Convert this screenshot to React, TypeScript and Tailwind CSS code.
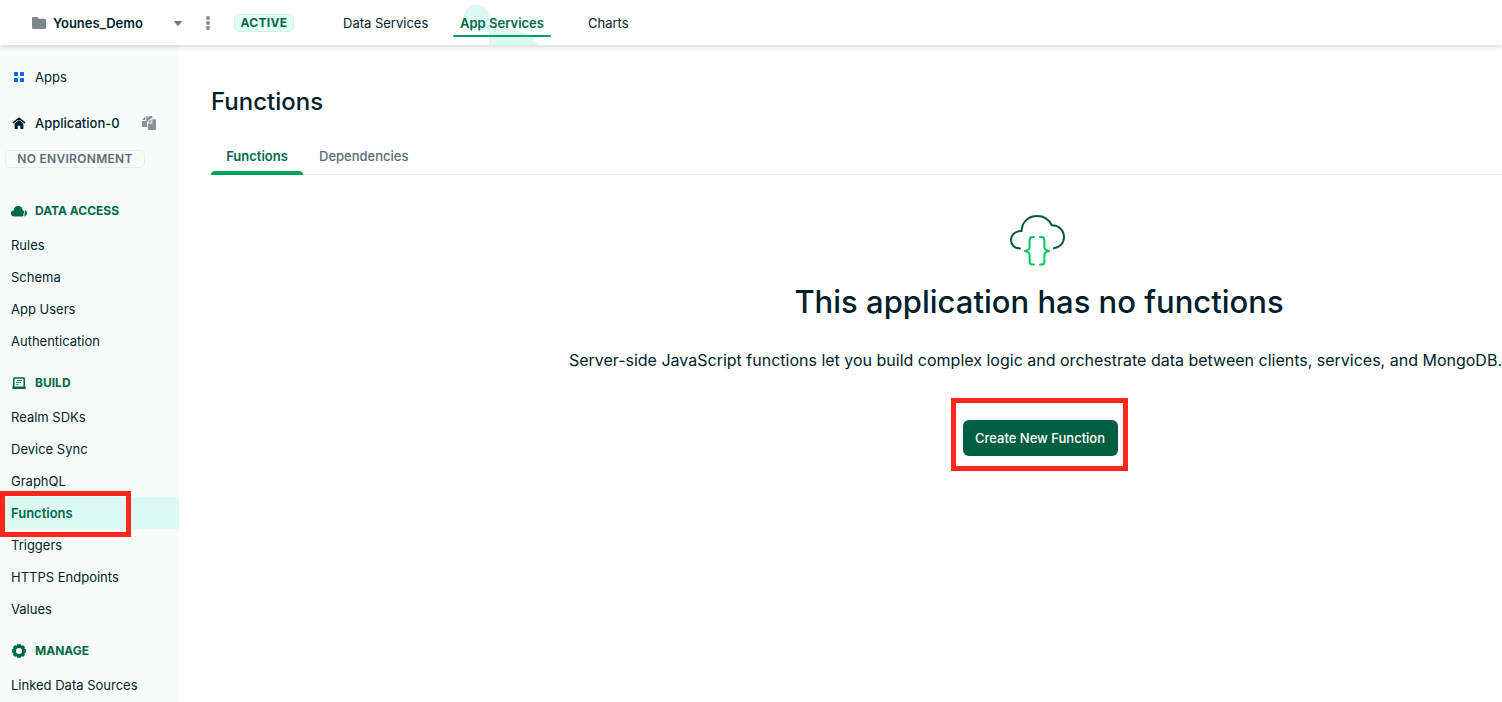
import type { ReactNode } from "react";

type Section = { title: string; icon: ReactNode; items: string[] };

function FolderIcon() {
  return (
    <svg viewBox="0 0 14 12" className="h-3 w-3.5 shrink-0" fill="#7b878d" aria-hidden="true">
      <path d="M0 1.2Q0 0 1.2 0H5Q6 0 6.3 1L6.6 1.8H12.8Q14 1.8 14 3V10.8Q14 12 12.8 12H1.2Q0 12 0 10.8Z" />
    </svg>
  );
}

function AppsIcon() {
  return (
    <svg viewBox="0 0 16 16" className="size-4 shrink-0" fill="#016bf8" aria-hidden="true">
      <path d="M3 3h4v4H3zM9 3h4v4H9zM3 9h4v4H3zM9 9h4v4H9z" />
    </svg>
  );
}

function HomeIcon() {
  return (
    <svg viewBox="0 0 16 16" className="size-4 shrink-0" aria-hidden="true">
      <path d="M2.4 7.6L8 3.1L13.6 7.6" fill="none" stroke="#001e2b" strokeWidth="1.5" strokeLinecap="round" />
      <path d="M8 5.1L12.4 8.6V13.2Q12.4 14 11.6 14H9.3V10.7H6.7V14H4.4Q3.6 14 3.6 13.2V8.6Z" fill="#001e2b" />
    </svg>
  );
}

function CopyIcon() {
  return (
    <svg viewBox="0 0 16 16" className="size-4" fill="#889397" aria-hidden="true">
      <path d="M1 5L4.4 1.4V5ZM5.3 1H6.7V3L8.2 1H10.4Q11.4 1 11.4 2V3.3H10L6 7.2V12H2Q1 12 1 11V6H5.3Z" />
      <path d="M6.9 7.5L10.3 4.2V7.5ZM11.3 4.2H14Q15 4.2 15 5.2V14Q15 15 14 15H7.9Q6.9 15 6.9 14V8.5H11.3Z" />
    </svg>
  );
}

function CloudIcon() {
  return (
    <svg viewBox="0 0 16 16" className="size-4 shrink-0" fill="#00684a" aria-hidden="true">
      <path d="M3.2 13.4Q0 13.2 0 10.4Q0 7.7 2.6 7.4Q3.2 3 7.2 3Q11 3 11.7 6.9Q13.2 7.5 13.2 9.2Q13.2 10.3 12.3 10.8Q12.8 11.4 12.6 12.2Q12.2 13.4 10.8 13.4Z" />
      <path d="M13.4 7.2Q16 7.5 16 10Q16 13 12.8 13.4Q14.1 12.3 13.5 11Q14.6 9.5 13.4 7.2Z" />
    </svg>
  );
}

function LaptopIcon() {
  return (
    <svg viewBox="0 0 16 16" className="size-4 shrink-0" aria-hidden="true">
      <path d="M2.8 12V3.6Q2.8 2.9 3.5 2.9H12.5Q13.2 2.9 13.2 3.6V12" fill="none" stroke="#00684a" strokeWidth="1.5" />
      <path d="M1.3 11.6H14.7V13.2Q14.7 14 13.9 14H2.1Q1.3 14 1.3 13.2Z" fill="#00684a" />
      <path d="M6 5.5H11M5 7.4H10M5.2 9.3H7.6" stroke="#00684a" strokeWidth="0.9" />
    </svg>
  );
}

function GearIcon() {
  return (
    <svg viewBox="0 0 16 16" className="size-4 shrink-0" aria-hidden="true">
      <path
        fillRule="evenodd"
        fill="#00684a"
        d="M6.2 1.2H9.8L10.5 2.8L12.1 2.2L14 4.1L13.3 5.6L14.8 6.2V9.8L13.3 10.4L14 11.9L12.1 13.8L10.5 13.2L9.8 14.8H6.2L5.5 13.2L3.9 13.8L2 11.9L2.7 10.4L1.2 9.8V6.2L2.7 5.6L2 4.1L3.9 2.2L5.5 2.8ZM8 5A3 3 0 1 0 8 11A3 3 0 1 0 8 5Z"
      />
    </svg>
  );
}

function CloudFunctionArt() {
  return (
    <svg viewBox="2 0 60 56" className="h-14 w-15" fill="none" strokeWidth="2" strokeLinecap="round" strokeLinejoin="round" aria-hidden="true">
      <path stroke="#00593f" d="M13 36.4C7.5 36.4 4 32.8 4 28C4 23 8 19 14.6 19C14.8 10 21.5 4 30 4C37 4 42 7.5 44.8 13.3C52 13.3 57 18.5 57 25C57 31 52.8 35.5 46.8 36.2" />
      <path stroke="#00c75a" d="M27 25H25.8Q22.6 25 22.6 28.2V35Q22.6 38.2 18 39Q22.6 39.8 22.6 43V49.4Q22.6 52.6 25.8 52.6H27" />
      <path stroke="#00c75a" d="M33 25H34.2Q37.4 25 37.4 28.2V35Q37.4 38.2 42 39Q37.4 39.8 37.4 43V49.4Q37.4 52.6 34.2 52.6H33" />
    </svg>
  );
}

const sections: Section[] = [
  { title: "DATA ACCESS", icon: <CloudIcon />, items: ["Rules", "Schema", "App Users", "Authentication"] },
  {
    title: "BUILD",
    icon: <LaptopIcon />,
    items: ["Realm SDKs", "Device Sync", "GraphQL", "Functions", "Triggers", "HTTPS Endpoints", "Values"],
  },
  { title: "MANAGE", icon: <GearIcon />, items: ["Linked Data Sources"] },
];

function Header() {
  return (
    <header className="relative z-10 flex h-[45px] items-center bg-white pl-8 pt-px shadow-[0_2px_5px_rgba(0,30,43,0.16)]">
      <button type="button" className="flex w-[150px] items-center gap-[7px] font-semibold">
        <FolderIcon />
        <span>Younes_Demo</span>
        <svg viewBox="0 0 8 5" className="ml-auto h-[5px] w-2" fill="#6c797f" aria-hidden="true">
          <path d="M.5 0H7.5Q8.3 0 7.8.7L4.6 4.6Q4 5.3 3.4 4.6L.2.7Q-.3 0 .5 0Z" />
        </svg>
      </button>
      <button type="button" aria-label="Project options" className="ml-[18px] flex w-4 justify-center">
        <svg viewBox="0 0 4 14" className="h-3.5 w-1" fill="#7b878d" aria-hidden="true">
          <circle cx="2" cy="2" r="1.9" />
          <circle cx="2" cy="7" r="1.9" />
          <circle cx="2" cy="12" r="1.9" />
        </svg>
      </button>
      <span className="ml-[18px] flex h-[18px] w-15 items-center justify-center rounded-[5px] border border-[#c0fae6] bg-[#e3fcf7] text-xs font-bold tracking-wide text-[#00684a]">
        ACTIVE
      </span>
      <nav className="ml-[49px] flex h-full items-center">
        <a href="#data-services" className="w-[85px] whitespace-nowrap">Data Services</a>
        <a href="#app-services" className="relative ml-[25px] flex h-full w-[98px] items-center justify-center whitespace-nowrap font-semibold text-[#00684a]">
          <svg viewBox="0 0 98 45" className="absolute bottom-0 left-0 h-[45px] w-[98px]" aria-hidden="true">
            <path d="M11 17A12.5 12.5 0 0 1 36 17V29H50C67 29 79 34 85 45H36V33Q27 29 16 29Q11 27 11 17Z" fill="#dcfaf4" />
          </svg>
          <span className="relative">App Services</span>
          <span className="absolute bottom-2 left-0 h-0.5 w-full rounded-full bg-[#00a35c]" />
        </a>
        <a href="#charts" className="ml-[37px]">Charts</a>
      </nav>
    </header>
  );
}

function Sidebar() {
  return (
    <aside className="w-[179px] shrink-0 bg-[#f9fbfa] pt-4">
      <a href="#apps" className="flex h-8 items-center gap-2 pl-[11px]">
        <AppsIcon />
        Apps
      </a>
      <div className="mt-3.5 flex h-8 items-center pl-[11px] pr-[22px]">
        <a href="#application" className="flex items-center gap-2 font-medium">
          <HomeIcon />
          Application-0
        </a>
        <button type="button" aria-label="Copy app ID" className="ml-auto">
          <CopyIcon />
        </button>
      </div>
      <div className="ml-[5px] mt-[11px] flex h-[18px] w-35 items-center justify-center rounded-[5px] border border-[#e8edeb] text-xs font-semibold tracking-wide text-[#5c6c75]">
        NO ENVIRONMENT
      </div>
      <nav className="pt-[17px]">
        {sections.map((section) => (
          <section key={section.title}>
            <h2 className="mb-1.5 mt-3.5 flex h-6 items-center gap-2 pl-[11px] text-xs font-bold text-[#00684a]">
              {section.icon}
              {section.title}
            </h2>
            <ul>
              {section.items.map((item) => {
                const active = item === "Functions";
                return (
                  <li key={item} className="relative">
                    <a
                      href={`#${item}`}
                      aria-current={active ? "page" : undefined}
                      className={
                        active
                          ? "flex h-8 items-center bg-[#dcfaf4] pl-[11px] font-semibold text-[#00684a]"
                          : "flex h-8 items-center pl-[11px]"
                      }
                    >
                      {item}
                    </a>
                    {active && (
                      <span className="pointer-events-none absolute -top-1.5 left-0 z-10 h-[46px] w-[131px] border-5 border-[#ff261d]" />
                    )}
                  </li>
                );
              })}
            </ul>
          </section>
        ))}
      </nav>
    </aside>
  );
}

export default function App() {
  return (
    <div className="flex min-h-screen flex-col overflow-x-hidden bg-white font-['Inter','Liberation_Sans',sans-serif] text-[13px] leading-5 text-[#001e2b]">
      <Header />
      <div className="flex grow">
        <Sidebar />
        <main className="flex min-w-0 grow flex-col pl-8 pt-[41px]">
          <h1 className="text-2xl font-medium leading-8">Functions</h1>
          <div role="tablist" className="mt-[19px] flex h-[38px] border-b border-[#e8edeb]">
            <button type="button" role="tab" aria-selected="true" className="relative w-23 font-semibold text-[#00684a]">
              Functions
              <span className="absolute -bottom-px left-0 h-1 w-full rounded-t bg-[#00a35c]" />
            </button>
            <button type="button" role="tab" aria-selected="false" className="px-4 font-medium text-[#5c6c75]">
              Dependencies
            </button>
          </div>
          <section className="flex w-[926px] max-w-full flex-col items-center self-end pt-[37px]">
            <CloudFunctionArt />
            <h2 className="mt-3.5 text-[31px] font-medium leading-10">This application has no functions</h2>
            <p className="mt-[26px] self-end whitespace-nowrap text-base leading-6">
              Server-side JavaScript functions let you build complex logic and orchestrate data between clients, services, and MongoDB.
            </p>
            <div className="mt-[26px] border-5 border-[#ff261d] pb-2.5 pl-[7px] pr-[5px] pt-[17px]">
              <button type="button" className="h-9 w-[155px] rounded-md bg-[#005e42] font-medium text-white">
                Create New Function
              </button>
            </div>
          </section>
        </main>
      </div>
    </div>
  );
}
